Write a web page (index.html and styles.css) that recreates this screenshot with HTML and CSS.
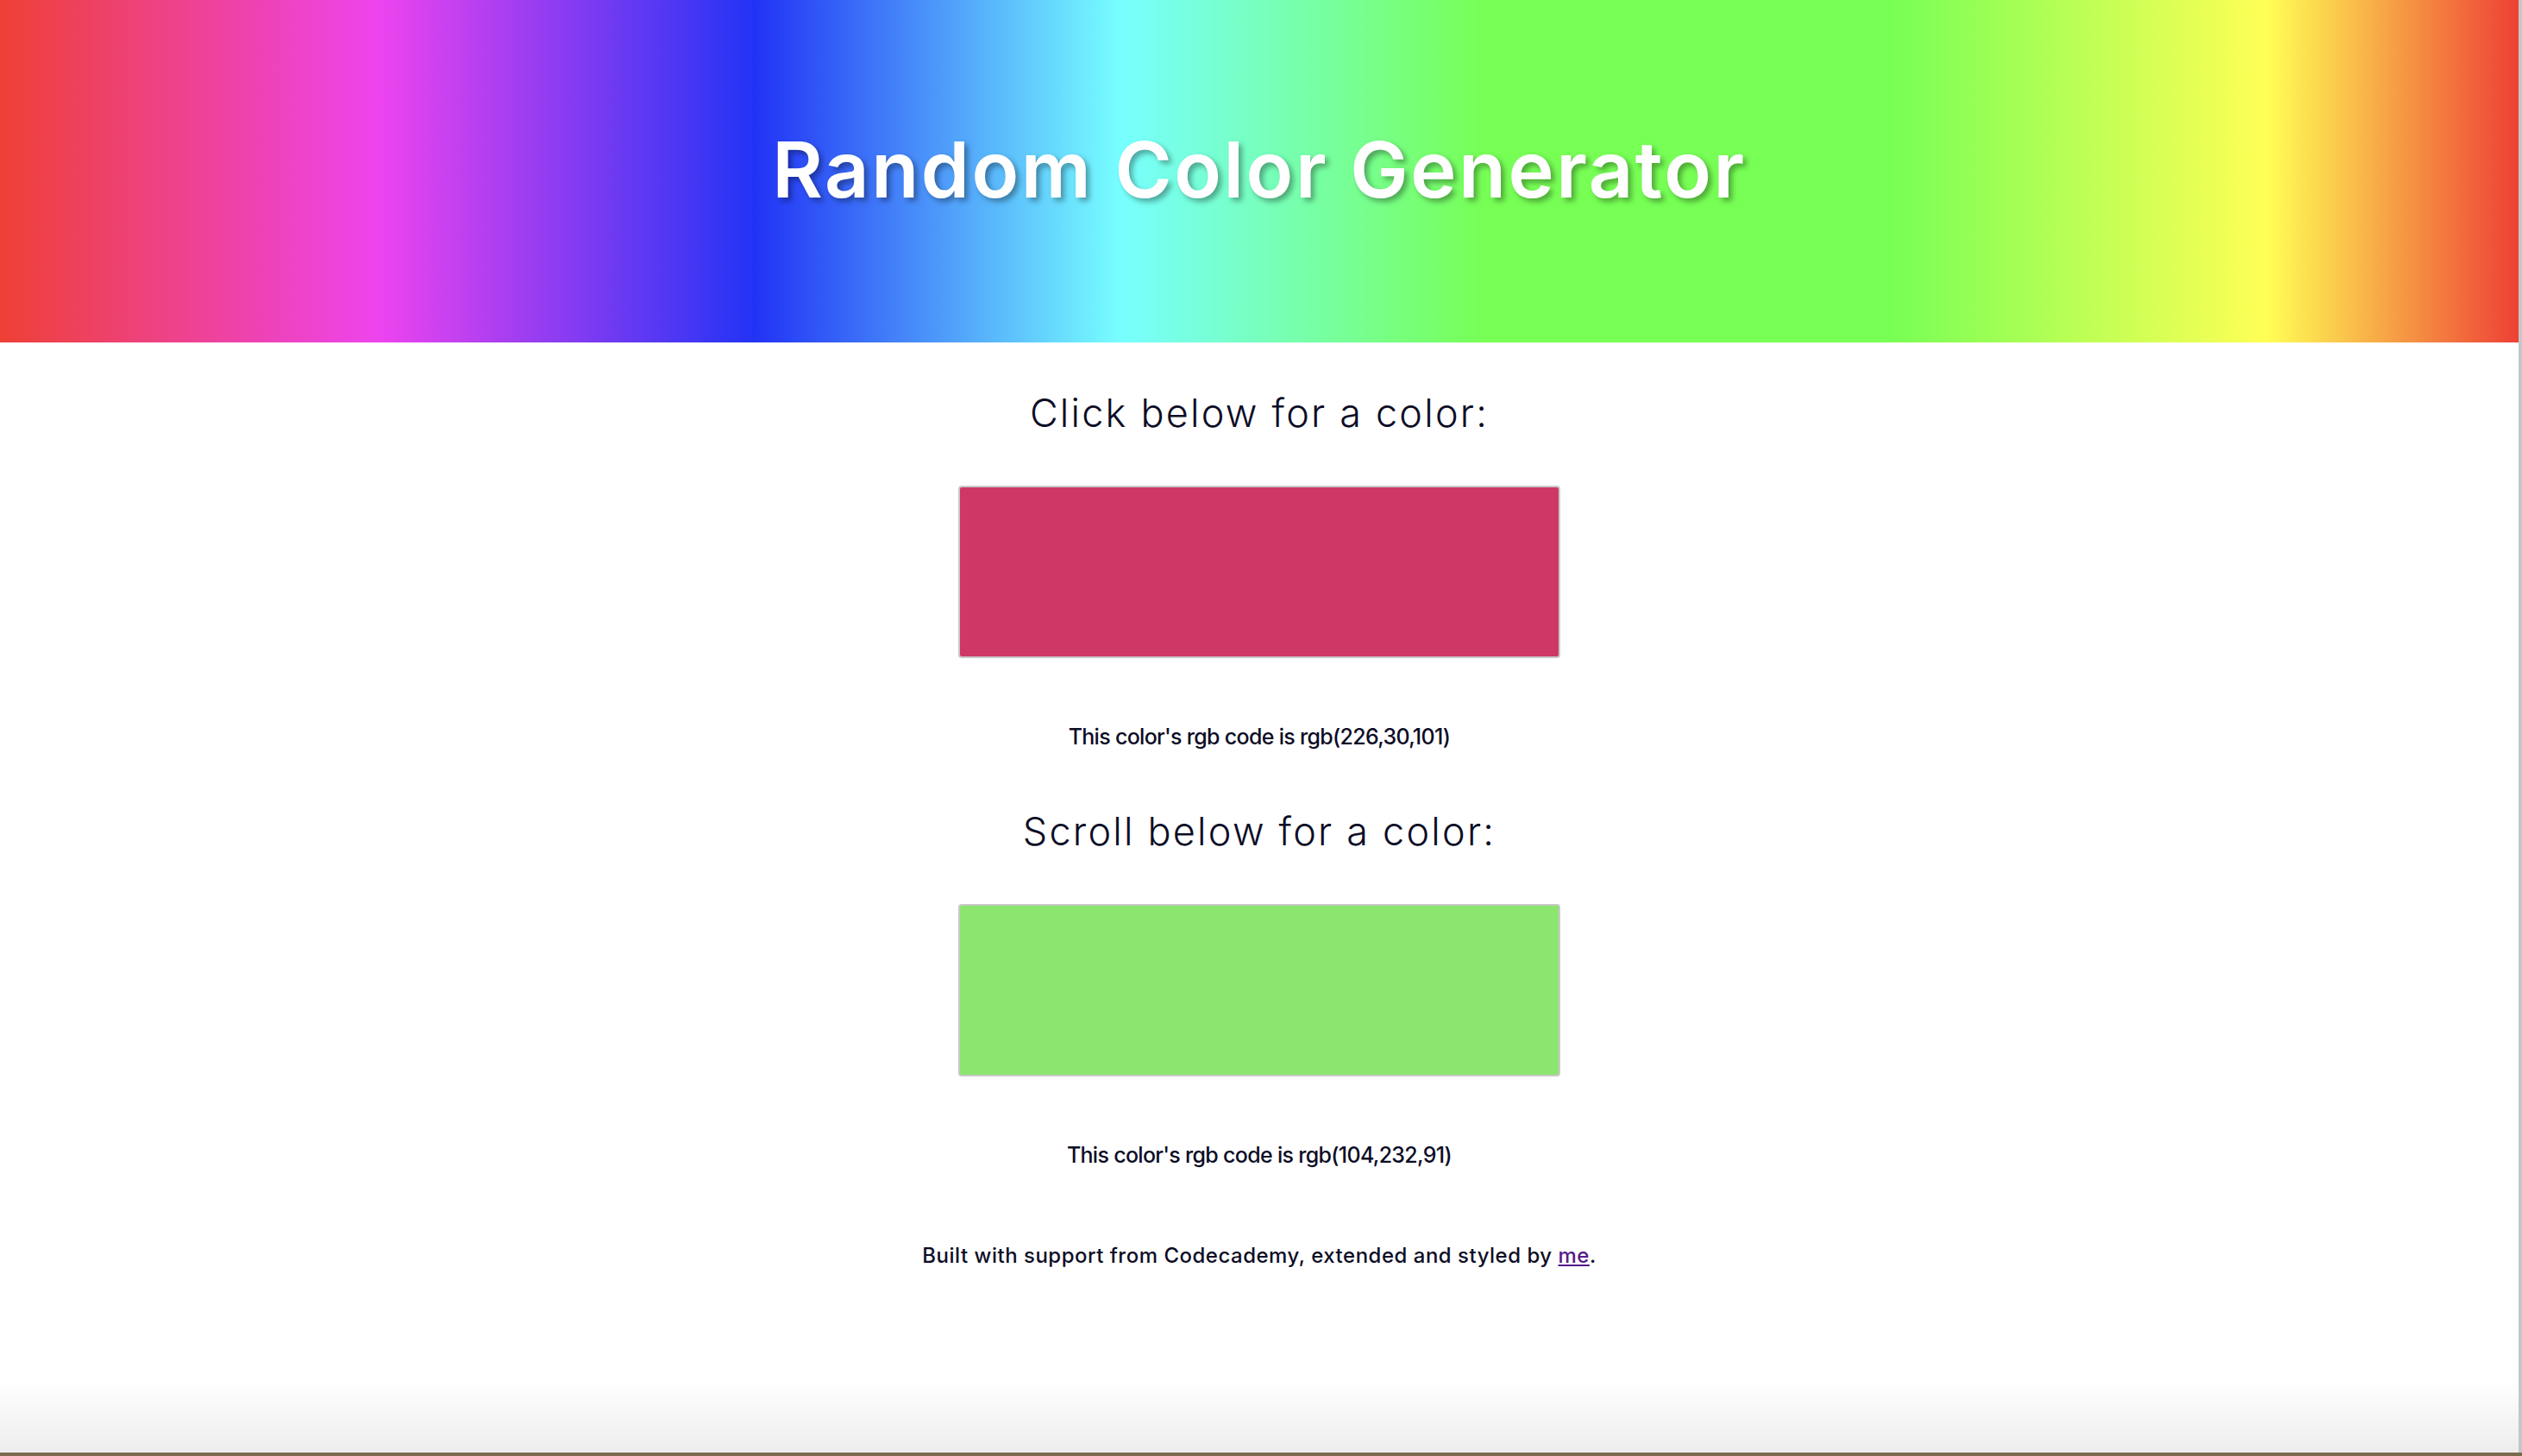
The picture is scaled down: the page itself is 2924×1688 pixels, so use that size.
FILE: index.html
```html
<!DOCTYPE html>
<html lang="en">
<head>
<meta charset="utf-8">
<title>Random Color Generator</title>
<link rel="stylesheet" href="styles.css">
</head>
<body>
<div class="window">
  <header class="hero">
    <h1 class="title">Random Color Generator</h1>
  </header>
  <main class="content">
    <section class="picker picker-click">
      <h2 class="prompt">Click below for a color:</h2>
      <div class="swatch swatch-pink"></div>
      <p class="code">This color's rgb code is rgb(226,30,101)</p>
    </section>
    <section class="picker picker-scroll">
      <h2 class="prompt">Scroll below for a color:</h2>
      <div class="swatch swatch-green"></div>
      <p class="code">This color's rgb code is rgb(104,232,91)</p>
    </section>
    <p class="credit">Built with support from Codecademy, extended and styled by <a class="credit-link" href="#">me</a>.</p>
  </main>
</div>
</body>
</html>
```

FILE: styles.css
```css
html, body {
  margin: 0;
  padding: 0;
}

body {
  background: #7a6a4e;
  font-family: Inter, "Noto Sans", "Liberation Sans", sans-serif;
  color: #0d0d26;
  width: 2924px;
  height: 1688px;
  overflow: hidden;
}

.window {
  width: 2920px;
  height: 1684px;
  border-right: 4px solid #c6c6c6;
  background: linear-gradient(to bottom, #ffffff 0, #ffffff 1600px, #ededed 1684px);
  display: flex;
  flex-direction: column;
}

.hero {
  height: 397px;
  flex: none;
  display: flex;
  align-items: center;
  justify-content: center;
  padding-bottom: 4px;
  box-sizing: border-box;
  background: linear-gradient(to right,
    #ee4035 0%,
    #ee44ee 15%,
    #2233f5 30%,
    #77ffff 44.5%,
    #77ff55 59%,
    #77ff55 75%,
    #ffff55 90%,
    #ee4035 100%);
}

.title {
  margin: 0;
  font-size: 90px;
  line-height: 90px;
  font-weight: 600;
  color: #ffffff;
  letter-spacing: 2.5px;
  text-shadow: 4px 4px 6px rgba(0, 0, 0, 0.35);
}

.content {
  display: flex;
  flex-direction: column;
  align-items: center;
}

.picker {
  display: flex;
  flex-direction: column;
  align-items: center;
}

.picker-click {
  margin-top: 56px;
}

.picker-scroll {
  margin-top: 68px;
}

.prompt {
  margin: 0;
  font-size: 45px;
  line-height: 52px;
  font-weight: 300;
  letter-spacing: 2.2px;
  color: #0d0d26;
}

.swatch {
  margin-top: 58px;
  width: 698px;
  height: 200px;
  box-sizing: border-box;
  border: 2px solid #c9c9c9;
  border-radius: 4px;
}

.swatch-pink {
  background: #cf3767;
}

.swatch-green {
  background: #8be56e;
}

.code {
  margin: 75px 0 0;
  font-size: 25px;
  line-height: 32px;
  font-weight: 500;
  letter-spacing: -0.7px;
  color: #0d0d26;
}

.credit {
  margin: 87px 0 0;
  font-size: 24px;
  line-height: 28px;
  font-weight: 500;
  letter-spacing: 0.5px;
  color: #0d0d26;
}

.credit-link {
  color: #551a8b;
}
```
